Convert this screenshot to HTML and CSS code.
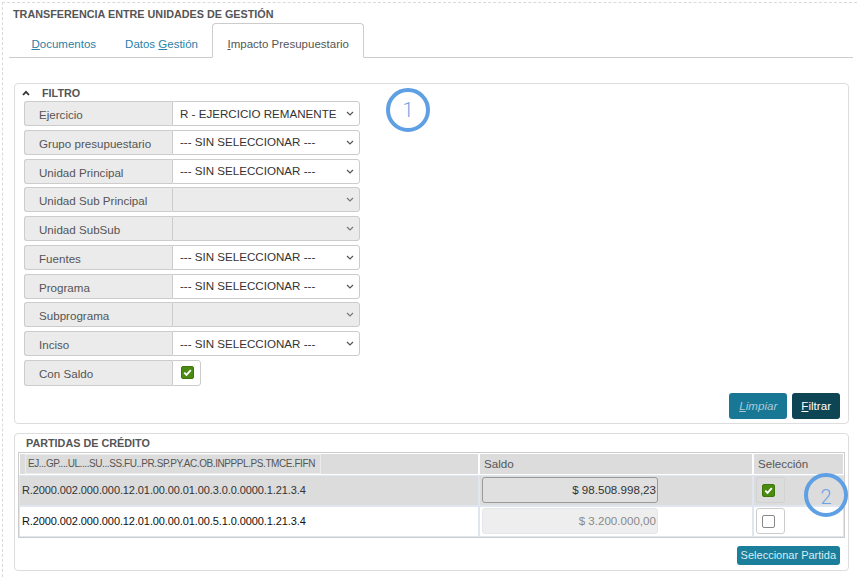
FILE: index.html
```html
<!DOCTYPE html>
<html lang="es">
<head>
<meta charset="utf-8">
<title>Transferencia entre unidades de gestión</title>
<link rel="stylesheet" href="styles.css">
</head>
<body>
<div class="page">
  <div class="title">TRANSFERENCIA ENTRE UNIDADES DE GESTIÓN</div>
  <ul class="tabs">
    <li class="tab"><a><u>D</u>ocumentos</a></li>
    <li class="tab"><a>Datos <u>G</u>estión</a></li>
    <li class="tab active"><a><u>I</u>mpacto Presupuestario</a></li>
  </ul>
  <div class="tab-content">
    <section class="panel filtro">
      <div class="panel-head"><svg class="caret" width="8" height="6" viewBox="0 0 8 6"><polyline points="1,5 4,1.8 7,5" fill="none" stroke="#333" stroke-width="1.8"/></svg><span>FILTRO</span></div>
      <div class="form">
        <div class="field"><span class="addon">Ejercicio</span><div class="select"><span>R - EJERCICIO REMANENTE</span><svg class="chev" width="8" height="5" viewBox="0 0 8 5"><polyline points="1,1 4,4 7,1" fill="none" stroke="#555" stroke-width="1.2"/></svg></div></div>
        <div class="field"><span class="addon">Grupo presupuestario</span><div class="select"><span>--- SIN SELECCIONAR ---</span><svg class="chev" width="8" height="5" viewBox="0 0 8 5"><polyline points="1,1 4,4 7,1" fill="none" stroke="#555" stroke-width="1.2"/></svg></div></div>
        <div class="field"><span class="addon">Unidad Principal</span><div class="select"><span>--- SIN SELECCIONAR ---</span><svg class="chev" width="8" height="5" viewBox="0 0 8 5"><polyline points="1,1 4,4 7,1" fill="none" stroke="#555" stroke-width="1.2"/></svg></div></div>
        <div class="field"><span class="addon">Unidad Sub Principal</span><div class="select disabled"><span></span><svg class="chev" width="8" height="5" viewBox="0 0 8 5"><polyline points="1,1 4,4 7,1" fill="none" stroke="#777" stroke-width="1.2"/></svg></div></div>
        <div class="field"><span class="addon">Unidad SubSub</span><div class="select disabled"><span></span><svg class="chev" width="8" height="5" viewBox="0 0 8 5"><polyline points="1,1 4,4 7,1" fill="none" stroke="#777" stroke-width="1.2"/></svg></div></div>
        <div class="field"><span class="addon">Fuentes</span><div class="select"><span>--- SIN SELECCIONAR ---</span><svg class="chev" width="8" height="5" viewBox="0 0 8 5"><polyline points="1,1 4,4 7,1" fill="none" stroke="#555" stroke-width="1.2"/></svg></div></div>
        <div class="field"><span class="addon">Programa</span><div class="select"><span>--- SIN SELECCIONAR ---</span><svg class="chev" width="8" height="5" viewBox="0 0 8 5"><polyline points="1,1 4,4 7,1" fill="none" stroke="#555" stroke-width="1.2"/></svg></div></div>
        <div class="field"><span class="addon">Subprograma</span><div class="select disabled"><span></span><svg class="chev" width="8" height="5" viewBox="0 0 8 5"><polyline points="1,1 4,4 7,1" fill="none" stroke="#777" stroke-width="1.2"/></svg></div></div>
        <div class="field"><span class="addon">Inciso</span><div class="select"><span>--- SIN SELECCIONAR ---</span><svg class="chev" width="8" height="5" viewBox="0 0 8 5"><polyline points="1,1 4,4 7,1" fill="none" stroke="#555" stroke-width="1.2"/></svg></div></div>
        <div class="field last"><span class="addon">Con Saldo</span><div class="check-box"><span class="cb on"><svg width="11" height="11" viewBox="0 0 11 11"><polyline points="2.2,5.6 4.5,7.8 8.8,3.2" fill="none" stroke="#fff" stroke-width="1.9"/></svg></span></div></div>
      </div>
      <div class="actions">
        <button class="btn limpiar"><u>L</u>impiar</button>
        <button class="btn filtrar"><u>F</u>iltrar</button>
      </div>
      <span class="mark m1">1</span>
    </section>

    <section class="panel partidas">
      <div class="panel-head p2">PARTIDAS DE CRÉDITO</div>
      <table class="grid">
        <thead>
          <tr>
            <th class="c1"><span class="code-head">EJ...GP....UL....SU...SS.FU..PR.SP.PY.AC.OB.INPPPL.PS.TMCE.FIFN</span></th>
            <th class="c2">Saldo</th>
            <th class="c3">Selección</th>
          </tr>
        </thead>
        <tbody>
          <tr class="sel">
            <td class="code">R.2000.002.000.000.12.01.00.00.01.00.3.0.0.0000.1.21.3.4</td>
            <td><div class="amount">$ 98.508.998,23</div></td>
            <td><div class="chk-wrap"><span class="cb on"><svg width="11" height="11" viewBox="0 0 11 11"><polyline points="2.2,5.6 4.5,7.8 8.8,3.2" fill="none" stroke="#fff" stroke-width="1.9"/></svg></span></div></td>
          </tr>
          <tr>
            <td class="code dark">R.2000.002.000.000.12.01.00.00.01.00.5.1.0.0000.1.21.3.4</td>
            <td><div class="amount dis">$ 3.200.000,00</div></td>
            <td><div class="chk-wrap white"><span class="cb"></span></div></td>
          </tr>
        </tbody>
      </table>
      <div class="actions small">
        <button class="btn btn-sm">Seleccionar Partida</button>
      </div>
      <span class="mark m2">2</span>
    </section>
  </div>
</div>
</body>
</html>
```
FILE: styles.css
```css
* { box-sizing: border-box; }

body {
  margin: 0;
  padding: 2px 0 0 2px;
  background: #fff;
  font-family: "Liberation Sans", Arial, sans-serif;
  color: #333;
}

.page {
  border-top: 1px dashed #d9d9d9;
  border-left: 1px dashed #d9d9d9;
  min-height: 575px;
}

.title {
  height: 20px;
  padding: 4px 0 0 10px;
  font-size: 10.8px;
  line-height: 14px;
  font-weight: bold;
  color: #555;
}

.tabs {
  list-style: none;
  margin: 0 4px 0 6px;
  padding: 0 0 0 8px;
  display: flex;
  height: 35px;
  border-bottom: 1px solid #ccc;
}

.tab a {
  display: block;
  height: 34px;
  padding: 11px 14.5px 0;
  font-size: 11.5px;
  line-height: 20px;
  color: #2a7fa8;
  cursor: pointer;
}

.tab.active a {
  height: 35px;
  padding: 10px 14px 0;
  border: 1px solid #ccc;
  border-bottom-color: #fff;
  border-radius: 4px 4px 0 0;
  background: #fff;
  color: #555;
}

.tab-content {
  padding: 25px 8px 0 11px;
}

.panel {
  position: relative;
  border: 1px solid #ddd;
  border-radius: 4px;
  background: #fff;
}

.filtro {
  padding: 0 8px 4px 9px;
}

.panel-head {
  display: flex;
  align-items: center;
  height: 17px;
  margin-left: -3px;
  font-size: 10.8px;
  font-weight: bold;
  color: #555;
}

.caret {
  margin-right: 12px;
  margin-left: 1px;
}

.form {
  margin-bottom: 7px;
}

.field {
  display: flex;
  height: 25px;
  margin-bottom: 3.75px;
}

.field.last {
  height: 26px;
  margin-bottom: 0;
}

.addon {
  width: 148px;
  flex: none;
  padding: 3px 0 0 14px;
  background: #ebebeb;
  border: 1px solid #ccc;
  border-right: 0;
  border-radius: 3px 0 0 3px;
  font-size: 11.6px;
  line-height: 20px;
  color: #555;
}

.select {
  width: 188px;
  display: flex;
  align-items: center;
  justify-content: space-between;
  padding: 0 5px 0 7px;
  border: 1px solid #ccc;
  border-radius: 0 3px 3px 0;
  background: #fff;
  font-size: 11.6px;
  color: #333;
}

.select span {
  margin-top: -1px;
}

.select.disabled {
  background: #ebebeb;
}

.check-box {
  width: 29px;
  display: flex;
  align-items: center;
  padding-left: 8px;
  border: 1px solid #ccc;
  border-radius: 0 3px 3px 0;
  background: #fff;
}

.cb {
  display: block;
  width: 13px;
  height: 13px;
  border: 1px solid #888;
  border-radius: 2px;
  background: #fff;
}

.cb.on {
  background: #4b8b12;
  border-color: #3e760c;
}

.cb svg {
  display: block;
}

.actions {
  display: flex;
  justify-content: flex-end;
  gap: 5px;
}

.btn {
  height: 26px;
  padding: 0 10px;
  border: 0;
  border-radius: 3px;
  font-family: "Liberation Sans", Arial, sans-serif;
  font-size: 11.6px;
  cursor: pointer;
}

.limpiar {
  background: #187795;
  color: #a9cbd8;
  font-style: italic;
}

.filtrar {
  padding: 0 9px;
  background: #0d4555;
  color: #fff;
}

.mark {
  position: absolute;
  width: 44px;
  height: 44px;
  display: flex;
  align-items: center;
  justify-content: center;
  border: 4px solid #5f9fe3;
  border-radius: 50%;
  font-family: Roboto, "Liberation Sans", sans-serif;
  font-weight: 300;
  font-size: 20px;
  color: #6ea3e3;
}

.m1 { left: 371px; top: 4px; }
.m2 { left: 789px; top: 39px; padding-top: 4px; }

.partidas {
  margin-top: 9px;
  padding: 0 3px 5px 3px;
}

.panel-head.p2 {
  height: 18px;
  margin-left: 0;
  padding-left: 8px;
  padding-top: 1px;
}

.grid {
  width: 100%;
  border-collapse: separate;
  border-spacing: 0;
  border: 1px solid #ccc;
  font-size: 11.6px;
}

.grid th {
  height: 22px;
  padding: 0 4px;
  background: #dcdcdc;
  border: 1px solid #fff;
  text-align: left;
  font-weight: normal;
  color: #555;
}

.grid th.c1 { padding: 0 5px; }
.grid th.c2 { width: 274px; }
.grid th.c3 { width: 91px; }

.code-head {
  display: block;
  width: 296px;
  padding: 2px 2px;
  border: 1px solid #ebebeb;
  font-size: 10px;
  letter-spacing: -0.42px;
  line-height: 14px;
  color: #555;
}

.grid td {
  height: 31px;
  padding: 1px 2px;
  border: 1px solid #dfe6ef;
  vertical-align: middle;
}

.grid tr.sel td {
  background: #dcdcdc;
}

.code {
  font-size: 11px;
  letter-spacing: -0.1px;
  color: #333;
}

.code.dark {
  color: #111;
}

.amount {
  width: 176px;
  height: 26px;
  padding-right: 1px;
  border: 1px solid #9a9a9a;
  border-radius: 3px;
  background: #e0e0e0;
  text-align: right;
  font-size: 11.6px;
  line-height: 24px;
  color: #333;
}

.amount.dis {
  border-color: #e3e6ea;
  background: #eee;
  color: #8a8a8a;
}

.chk-wrap {
  width: 29px;
  height: 26px;
  display: flex;
  align-items: center;
  padding-left: 5px;
  border: 1px solid #d2d2d2;
  border-radius: 3px;
  background: #dcdcdc;
}

.chk-wrap.white {
  background: #fff;
  border-color: #ccc;
}

.actions.small {
  margin-top: 8px;
  padding-right: 5px;
}

.btn-sm {
  height: 19px;
  padding: 0 4px;
  background: #1b7f9c;
  color: #dcecf2;
  font-size: 11px;
}
```
